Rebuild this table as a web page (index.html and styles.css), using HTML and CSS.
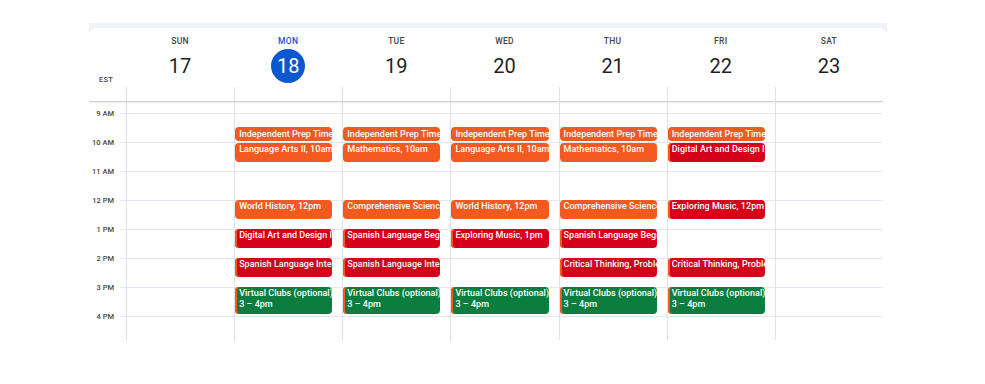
FILE: index.html
```html
<!DOCTYPE html>
<html lang="en">
<head>
<meta charset="utf-8">
<title>Week view</title>
<link rel="stylesheet" href="styles.css">
</head>
<body>
<div class="frame">
  <div class="card">
    <div class="head">
      <div class="tz"><span>EST</span></div>
      <div class="day"><div class="dname">SUN</div><div class="dnum">17</div></div>
      <div class="day today"><div class="dname">MON</div><div class="dnum">18</div></div>
      <div class="day"><div class="dname">TUE</div><div class="dnum">19</div></div>
      <div class="day"><div class="dname">WED</div><div class="dnum">20</div></div>
      <div class="day"><div class="dname">THU</div><div class="dnum">21</div></div>
      <div class="day"><div class="dname">FRI</div><div class="dnum">22</div></div>
      <div class="day"><div class="dname">SAT</div><div class="dnum">23</div></div>
    </div>
    <div class="allday">
      <div class="tz-gap"></div>
      <div class="ad"></div><div class="ad"></div><div class="ad"></div><div class="ad"></div><div class="ad"></div><div class="ad"></div><div class="ad"></div>
    </div>
    <div class="body">
      <div class="times">
        <div class="hr"><span>9 AM</span></div>
        <div class="hr"><span>10 AM</span></div>
        <div class="hr"><span>11 AM</span></div>
        <div class="hr"><span>12 PM</span></div>
        <div class="hr"><span>1 PM</span></div>
        <div class="hr"><span>2 PM</span></div>
        <div class="hr"><span>3 PM</span></div>
        <div class="hr"><span>4 PM</span></div>
      </div>
      <div class="col"></div>
      <div class="col">
        <div class="ev orange short" style="top:25px;height:14px">Independent Prep Time, 9:30am</div>
        <div class="ev orange" style="top:41px;height:19px">Language Arts II, 10am</div>
        <div class="ev orange" style="top:98px;height:19px">World History, 12pm</div>
        <div class="ev red" style="top:127px;height:19px">Digital Art and Design I, 1pm</div>
        <div class="ev red" style="top:156px;height:19px">Spanish Language Intermediate, 2pm</div>
        <div class="ev green" style="top:185px;height:27px">Virtual Clubs (optional)<br>3 – 4pm</div>
      </div>
      <div class="col">
        <div class="ev orange short" style="top:25px;height:14px">Independent Prep Time, 9:30am</div>
        <div class="ev orange" style="top:41px;height:19px">Mathematics, 10am</div>
        <div class="ev orange" style="top:98px;height:19px">Comprehensive Science, 12pm</div>
        <div class="ev red" style="top:127px;height:19px">Spanish Language Beginner, 1pm</div>
        <div class="ev red" style="top:156px;height:19px">Spanish Language Intermediate, 2pm</div>
        <div class="ev green" style="top:185px;height:27px">Virtual Clubs (optional)<br>3 – 4pm</div>
      </div>
      <div class="col">
        <div class="ev orange short" style="top:25px;height:14px">Independent Prep Time, 9:30am</div>
        <div class="ev orange" style="top:41px;height:19px">Language Arts II, 10am</div>
        <div class="ev orange" style="top:98px;height:19px">World History, 12pm</div>
        <div class="ev red" style="top:127px;height:19px">Exploring Music, 1pm</div>
        <div class="ev green" style="top:185px;height:27px">Virtual Clubs (optional)<br>3 – 4pm</div>
      </div>
      <div class="col">
        <div class="ev orange short" style="top:25px;height:14px">Independent Prep Time, 9:30am</div>
        <div class="ev orange" style="top:41px;height:19px">Mathematics, 10am</div>
        <div class="ev orange" style="top:98px;height:19px">Comprehensive Science, 12pm</div>
        <div class="ev red" style="top:127px;height:19px">Spanish Language Beginner, 1pm</div>
        <div class="ev red" style="top:156px;height:19px">Critical Thinking, Problem Solving, 2pm</div>
        <div class="ev green" style="top:185px;height:27px">Virtual Clubs (optional)<br>3 – 4pm</div>
      </div>
      <div class="col">
        <div class="ev orange short" style="top:25px;height:14px">Independent Prep Time, 9:30am</div>
        <div class="ev red" style="top:41px;height:19px">Digital Art and Design I, 10am</div>
        <div class="ev red" style="top:98px;height:19px">Exploring Music, 12pm</div>
        <div class="ev red" style="top:156px;height:19px">Critical Thinking, Problem Solving, 2pm</div>
        <div class="ev green" style="top:185px;height:27px">Virtual Clubs (optional)<br>3 – 4pm</div>
      </div>
      <div class="col"></div>
    </div>
  </div>
</div>
</body>
</html>
```
FILE: styles.css
```css
html, body {
  margin: 0;
  padding: 0;
  background: #ffffff;
  font-family: Roboto, "Noto Sans", Arial, sans-serif;
}

.frame {
  margin: 23px 0 0 89px;
  width: 798px;
  height: 361px;
  background: #f0f4f9;
  padding-top: 5px;
  box-sizing: border-box;
  display: flex;
  flex-direction: column;
}

.card {
  flex: 1;
  background: #ffffff;
  border-radius: 8px 8px 0 0;
  padding-right: 4px;
}

.head {
  display: grid;
  grid-template-columns: 37px repeat(7, 1fr);
  height: 59px;
}

.tz {
  display: flex;
  align-items: flex-end;
  justify-content: flex-end;
  padding: 0 13px 2px 0;
}

.tz span {
  font-size: 7.5px;
  line-height: 10px;
  font-weight: 500;
  color: #444746;
  letter-spacing: 0.2px;
}

.day {
  display: flex;
  flex-direction: column;
  align-items: center;
  padding-top: 7px;
}

.dname {
  font-size: 8.5px;
  line-height: 12px;
  font-weight: 500;
  letter-spacing: 0.3px;
  color: #444746;
}

.dnum {
  margin-top: 2px;
  width: 34px;
  height: 34px;
  line-height: 34px;
  text-align: center;
  font-size: 20px;
  color: #1f1f1f;
  border-radius: 50%;
}

.today .dname {
  color: #0b57d0;
}

.today .dnum {
  background: #0b57d0;
  color: #ffffff;
}

.allday {
  display: grid;
  grid-template-columns: 37px repeat(7, 1fr);
  height: 14px;
  border-bottom: 1px solid #cfd3d8;
  box-shadow: 0 1px 1px rgba(60, 64, 67, 0.08);
  position: relative;
}

.ad {
  border-left: 1px solid #dde3ea;
}

.body {
  display: grid;
  grid-template-columns: 37px repeat(7, 1fr);
  grid-template-rows: 238px;
  height: 238px;
  background-image: repeating-linear-gradient(to bottom, #e3e7ed 0, #e3e7ed 1px, transparent 1px, transparent 29px);
  background-repeat: no-repeat;
  background-position: 31px 11px;
}

.times {
  padding-top: 11px;
}

.hr {
  display: flow-root;
  height: 29px;
}

.hr:last-child {
  height: 24px;
}

.hr span {
  display: block;
  margin-top: -4px;
  padding-right: 12px;
  text-align: right;
  font-size: 7.5px;
  line-height: 10px;
  font-weight: 500;
  color: #444746;
}

.col {
  position: relative;
  border-left: 1px solid #dde3ea;
}

.ev {
  position: absolute;
  left: 0;
  right: 10px;
  box-sizing: border-box;
  border-radius: 4px;
  padding: 1px 4px 0 4px;
  font-size: 9px;
  line-height: 11px;
  font-weight: 500;
  letter-spacing: 0.03px;
  color: #ffffff;
  white-space: nowrap;
  overflow: hidden;
}

.ev.short {
  padding-top: 2px;
}

.orange {
  background: #f4591f;
}

.red {
  background: #d50019;
  box-shadow: inset 2px 0 0 #f4591f;
}

.green {
  background: #0b7d3e;
  box-shadow: inset 2px 0 0 #f4591f;
}
```
